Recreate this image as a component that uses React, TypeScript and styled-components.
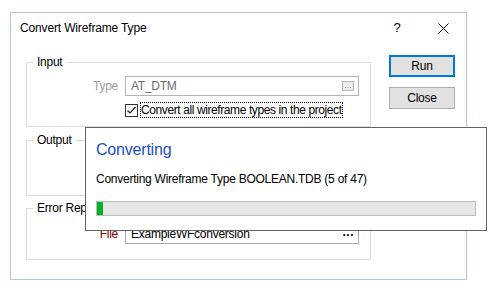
import styled, { createGlobalStyle } from 'styled-components'

const GlobalStyle = createGlobalStyle`
    html, body {
        margin: 0;
        padding: 0;
        background: #FFF;
    }
    body {
        font-family: "Liberation Sans", Arial, sans-serif;
        font-size: 12px;
        letter-spacing: -0.25px;
        color: #000;
    }
`

const Screen = styled.div`
    padding: 12px 0 0 10px;
`

const Window = styled.div`
    position: relative;
    box-sizing: border-box;
    width: 457px;
    height: 268px;
    border: 1px solid #A9C8E8;
    background: #FFF;
`

const TitleBar = styled.div`
    height: 30px;
    display: flex;
    align-items: center;
    padding-left: 9px;
`

const TitleText = styled.div`
    flex: 1;
    line-height: 16px;
    letter-spacing: -0.15px;
`

const TitleBtn = styled.div<{ $w: number }>`
    width: ${p => p.$w}px;
    display: flex;
    justify-content: center;
    align-items: center;
    font-size: 13px;
    line-height: 16px;
`

const Body = styled.div`
    display: flex;
    padding: 11px 0 0 15px;
    gap: 18px;
`

const LeftCol = styled.div`
    width: 345px;
    display: flex;
    flex-direction: column;
`

const Group = styled.fieldset<{ $h: number; $mt: number }>`
    box-sizing: border-box;
    margin: ${p => p.$mt}px 0 0 0;
    padding: 0 11px 0 0;
    min-width: 0;
    height: ${p => p.$h}px;
    border: 1px solid #DCDCDC;
`

const Legend = styled.legend`
    margin-left: 6px;
    padding: 0 4px;
    line-height: 16px;
    font-size: 12px;
`

const FieldRow = styled.div<{ $pt: number }>`
    display: grid;
    grid-template-columns: 98px 1fr;
    align-items: center;
    padding-top: ${p => p.$pt}px;
`

const Label = styled.div<{ $color: string }>`
    text-align: right;
    padding-right: 7px;
    color: ${p => p.$color};
    line-height: 16px;
`

const Field = styled.div<{ $disabled?: boolean }>`
    box-sizing: border-box;
    height: 20px;
    display: flex;
    align-items: center;
    padding: 0 4px 0 5px;
    border: 1px solid ${p => p.$disabled ? '#B4B4B4' : '#ABABAB'};
    color: ${p => p.$disabled ? '#6D6D6D' : '#000'};
    background: #FFF;
`

const FieldText = styled.div`
    flex: 1;
    line-height: 16px;
    white-space: nowrap;
`

const Dots = styled.span`
    font-weight: 700;
    font-size: 12px;
    letter-spacing: 0.5px;
    line-height: 10px;
    padding-bottom: 4px;
`

const CheckRow = styled.div`
    display: flex;
    align-items: center;
    margin: 6px 0 0 98px;
    gap: 2px;
`

const CheckBox = styled.div`
    box-sizing: border-box;
    width: 13px;
    height: 13px;
    border: 1px solid #333;
    background: #FFF;
    display: flex;
    align-items: center;
    justify-content: center;
`

const CheckLabel = styled.div`
    outline: 1px dotted #000;
    outline-offset: -1px;
    padding: 0 1px;
    line-height: 16px;
    letter-spacing: -0.4px;
    white-space: nowrap;
`

const RightCol = styled.div`
    display: flex;
    flex-direction: column;
    gap: 10px;
    padding-top: 1px;
`

const Button = styled.div<{ $default?: boolean }>`
    box-sizing: border-box;
    width: 66px;
    height: 22px;
    display: flex;
    align-items: center;
    justify-content: center;
    background: #E1E1E1;
    border: ${p => p.$default ? '2px solid #0078D7' : '1px solid #ADADAD'};
    line-height: 16px;
`

const Progress = styled.div`
    position: absolute;
    left: 74px;
    top: 114px;
    box-sizing: border-box;
    width: 402px;
    height: 104px;
    border: 1px solid #646464;
    background: #FFF;
    padding: 12px 10px 0 10px;
`

const ProgressTitle = styled.div`
    font-size: 16px;
    line-height: 20px;
    letter-spacing: -0.2px;
    color: #1C4FC4;
`

const ProgressText = styled.div`
    margin-top: 11px;
    line-height: 16px;
`

const Bar = styled.div`
    box-sizing: border-box;
    margin-top: 14px;
    height: 15px;
    border: 1px solid #BCBCBC;
    background: #E6E6E6;
`

const BarFill = styled.div`
    height: 100%;
    background: #06B025;
`

const BrowseIcon = () => (
    <svg width="12" height="10" viewBox="0 0 12 10">
        <rect x="0.5" y="0.5" width="11" height="9" fill="#EDEDED" stroke="#B4B4B4" />
        <rect x="3" y="6" width="1" height="1" fill="#8A8A8A" />
        <rect x="5.5" y="6" width="1" height="1" fill="#8A8A8A" />
        <rect x="8" y="6" width="1" height="1" fill="#8A8A8A" />
    </svg>
)

const CloseIcon = () => (
    <svg width="11" height="11" viewBox="0 0 11 11">
        <path d="M0.5 0.5 L10.5 10.5 M10.5 0.5 L0.5 10.5" stroke="#000" strokeWidth="1" />
    </svg>
)

const CheckMark = () => (
    <svg width="11" height="11" viewBox="0 0 11 11">
        <path d="M1.5 5.5 L4 8 L9.5 2" stroke="#222" strokeWidth="1.2" fill="none" />
    </svg>
)

const App = () => {
    const done = 5
    const total = 47
    // bar in the reference is only a few pixels wide at 5 of 47
    const fillPx = 6
    return (
        <Screen>
            <GlobalStyle />
            <Window>
                <TitleBar>
                    <TitleText>Convert Wireframe Type</TitleText>
                    <TitleBtn $w={46}>?</TitleBtn>
                    <TitleBtn $w={46}><CloseIcon /></TitleBtn>
                </TitleBar>

                <Body>
                    <LeftCol>
                        <Group $h={73} $mt={0}>
                            <Legend>Input</Legend>
                            <FieldRow $pt={6}>
                                <Label $color="#A0A0A0">Type</Label>
                                <Field $disabled>
                                    <FieldText>AT_DTM</FieldText>
                                    <BrowseIcon />
                                </Field>
                            </FieldRow>
                            <CheckRow>
                                <CheckBox><CheckMark /></CheckBox>
                                <CheckLabel>Convert all wireframe types in the project</CheckLabel>
                            </CheckRow>
                        </Group>

                        <Group $h={64} $mt={5}>
                            <Legend>Output</Legend>
                        </Group>

                        <Group $h={60} $mt={4}>
                            <Legend>Error Report</Legend>
                            <FieldRow $pt={8}>
                                <Label $color="#800000">File</Label>
                                <Field>
                                    <FieldText>ExampleWFconversion</FieldText>
                                    <Dots>...</Dots>
                                </Field>
                            </FieldRow>
                        </Group>
                    </LeftCol>

                    <RightCol>
                        <Button $default>Run</Button>
                        <Button>Close</Button>
                    </RightCol>
                </Body>

                <Progress>
                    <ProgressTitle>Converting</ProgressTitle>
                    <ProgressText>Converting Wireframe Type BOOLEAN.TDB ({done} of {total})</ProgressText>
                    <Bar>
                        <BarFill style={{ width: `${fillPx}px` }} />
                    </Bar>
                </Progress>
            </Window>
        </Screen>
    )
}

export default App
